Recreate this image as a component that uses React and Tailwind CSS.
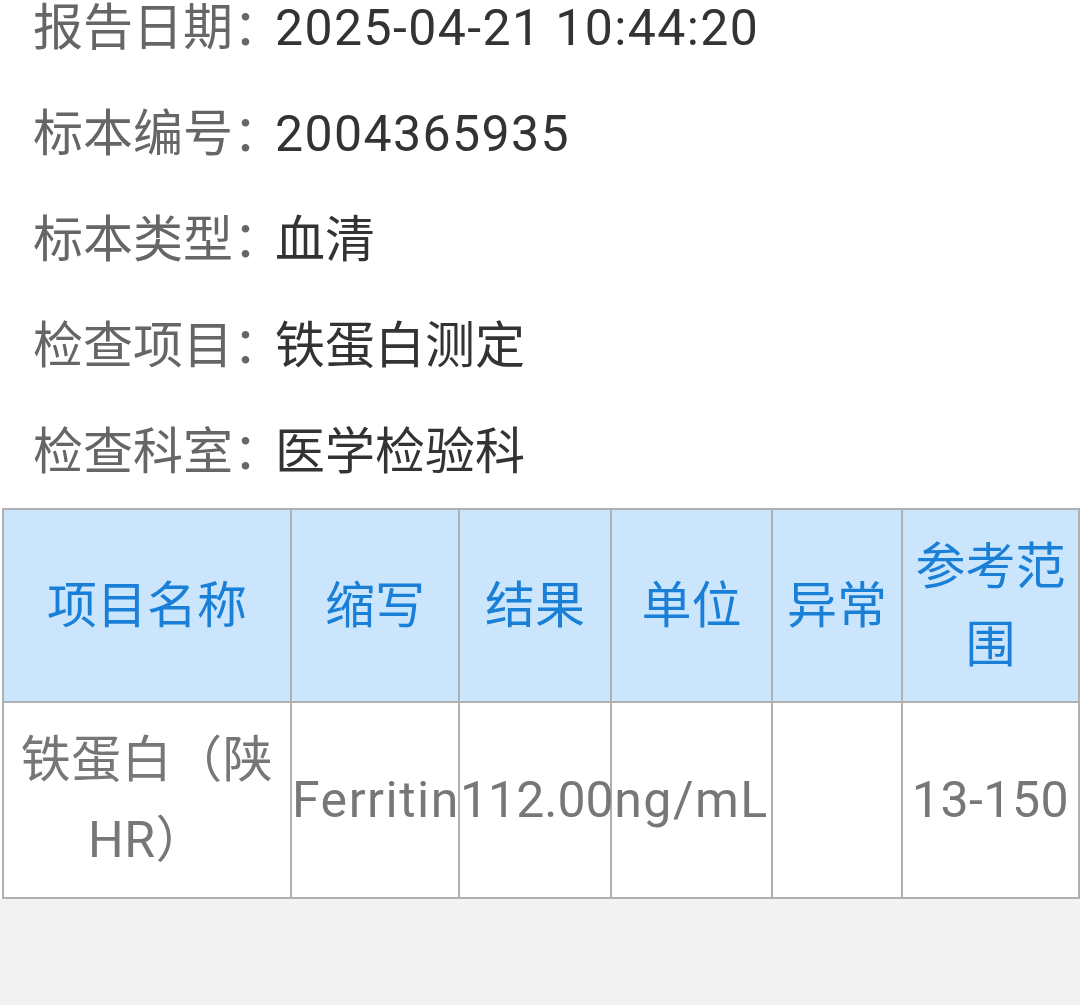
const INFO = [
  ['报告日期：', '2025-04-21 10:44:20', true],
  ['标本编号：', '2004365935', true],
  ['标本类型：', '血清', false],
  ['检查项目：', '铁蛋白测定', false],
  ['检查科室：', '医学检验科', false],
]

const HEADERS = ['项目名称', '缩写', '结果', '单位', '异常', '参考范围']
const WIDTHS = ['w-[288px]', 'w-[168px]', 'w-[152px]', 'w-[161px]', 'w-[130px]', 'w-[177px]']

export default function App() {
  return (
    <div className="min-h-screen bg-[#f2f2f2] overflow-hidden font-['Roboto','Noto_Sans_CJK_SC',sans-serif]">
      <div className="bg-white">
        {/* report info */}
        <div className="mt-[-25px] pl-[33px]">
          {INFO.map(([label, value, numeric]) => (
            <div key={label} className="flex items-center h-[106px] text-[50px] whitespace-nowrap">
              <span className="w-[242px] shrink-0 text-[#666]">{label}</span>
              <span className={numeric ? 'text-[#333] tracking-[1.4px]' : 'text-[#333]'}>{value}</span>
            </div>
          ))}
        </div>

        {/* result table */}
        <table className="mt-[3px] ml-[2px] w-[1076px] table-fixed border-collapse text-[50px] text-center">
          <colgroup>
            {WIDTHS.map(w => <col key={w} className={w} />)}
          </colgroup>
          <thead>
            <tr className="h-[193px] bg-[#cbe5fc] text-[#1a7fd6] leading-[78px]">
              {HEADERS.map(h => (
                <th key={h} className="border-2 border-[#b0b0b0] px-2 font-normal">{h}</th>
              ))}
            </tr>
          </thead>
          <tbody>
            <tr className="h-[196px] text-[#777] leading-[80px]">
              <td className="border-2 border-[#b0b0b0] px-0 tracking-[0.5px]">铁蛋白（陕<br />HR）</td>
              <td className="border-2 border-[#b0b0b0] px-0 tracking-[1.5px]">Ferritin</td>
              <td className="border-2 border-[#b0b0b0] px-0">112.00</td>
              <td className="border-2 border-[#b0b0b0] px-0 tracking-[1.5px]">ng/mL</td>
              <td className="border-2 border-[#b0b0b0] px-0"></td>
              <td className="border-2 border-[#b0b0b0] px-0 tracking-[0.5px]">13-150</td>
            </tr>
          </tbody>
        </table>
      </div>
    </div>
  )
}
